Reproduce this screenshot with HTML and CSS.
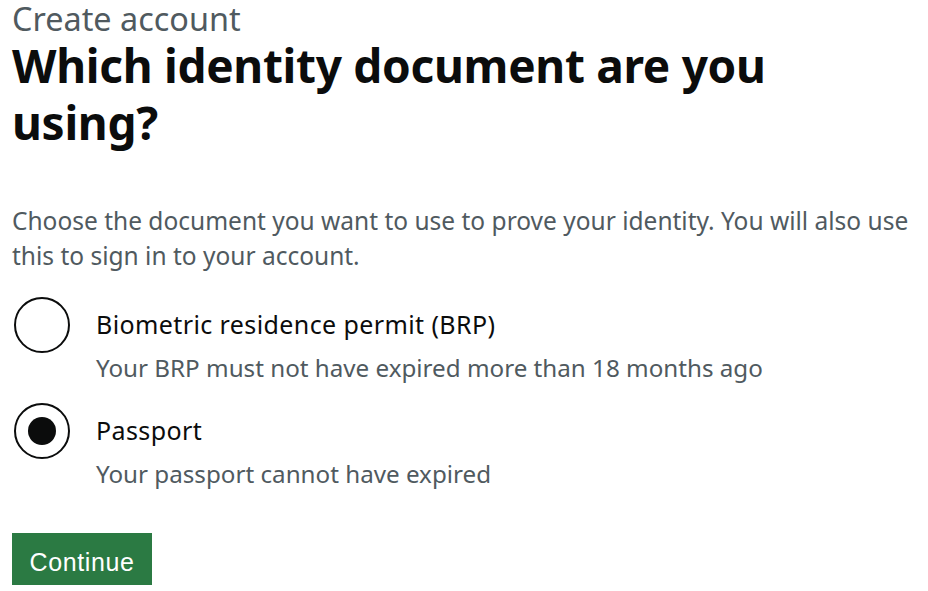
FILE: index.html
```html
<!DOCTYPE html>
<html lang="en">
<head>
<meta charset="UTF-8">
<meta name="viewport" content="width=device-width, initial-scale=1.0">
<title>Which identity document are you using?</title>
<link rel="stylesheet" href="styles.css">
</head>
<body>

<main class="page">
  <span class="caption">Create account</span>
  <h1 class="heading">Which identity document are you using?</h1>

  <p class="lead">Choose the document you want to use to prove your identity. You will also use this to sign in to your account.</p>

  <div class="radios">
    <label class="radio">
      <input type="radio" name="doc" value="brp">
      <span class="mark"></span>
      <span class="text">
        <span class="label">Biometric residence permit (BRP)</span>
        <span class="hint">Your BRP must not have expired more than 18 months ago</span>
      </span>
    </label>
    <label class="radio">
      <input type="radio" name="doc" value="passport" checked>
      <span class="mark"></span>
      <span class="text">
        <span class="label">Passport</span>
        <span class="hint">Your passport cannot have expired</span>
      </span>
    </label>
  </div>

  <button class="btn">Continue</button>
</main>

</body>
</html>
```

FILE: styles.css
```css
body {
  margin: 0;
  background: #fff;
  color: #0b0c0c;
  font-family: "Noto Sans", sans-serif;
}
.page {
  padding: 0 12px;
}
.caption {
  display: block;
  font-size: 32.4px;
  line-height: 36px;
  color: #505a5f;
}
.heading {
  margin: 1px 0 0;
  font-size: 46px;
  line-height: 57px;
  font-weight: 700;
  letter-spacing: -0.3px;
  max-width: 800px;
}
.lead {
  margin: 52px 0 0;
  font-size: 24.5px;
  line-height: 35px;
  color: #505a5f;
}
.radios {
  margin-top: 24px;
  display: flex;
  flex-direction: column;
  gap: 17px;
}
.radio {
  display: flex;
  align-items: flex-start;
  gap: 26px;
  cursor: pointer;
}
.radio input {
  display: none;
}
.mark {
  flex: none;
  box-sizing: border-box;
  width: 56px;
  height: 56px;
  margin-left: 2px;
  border: 2.5px solid #0b0c0c;
  border-radius: 50%;
  display: flex;
  align-items: center;
  justify-content: center;
}
.radio input:checked + .mark::after {
  content: "";
  width: 28px;
  height: 28px;
  border-radius: 50%;
  background: #0b0c0c;
}
.text {
  display: flex;
  flex-direction: column;
  gap: 8px;
  padding-top: 9px;
}
.label {
  font-size: 25px;
  line-height: 36px;
  letter-spacing: 0.4px;
}
.hint {
  font-size: 24.2px;
  line-height: 36px;
  color: #505a5f;
}
.btn {
  margin-top: 41px;
  width: 140px;
  height: 52px;
  padding: 6px 0 0;
  font-family: "Liberation Sans", Arial, sans-serif;
  font-size: 25px;
  line-height: 30px;
  letter-spacing: 0.6px;
  color: #fff;
  background: #2b7a43;
  border: none;
  border-radius: 0;
  box-shadow: 0 3px 0 #0f3a1e;
  cursor: pointer;
}
```
